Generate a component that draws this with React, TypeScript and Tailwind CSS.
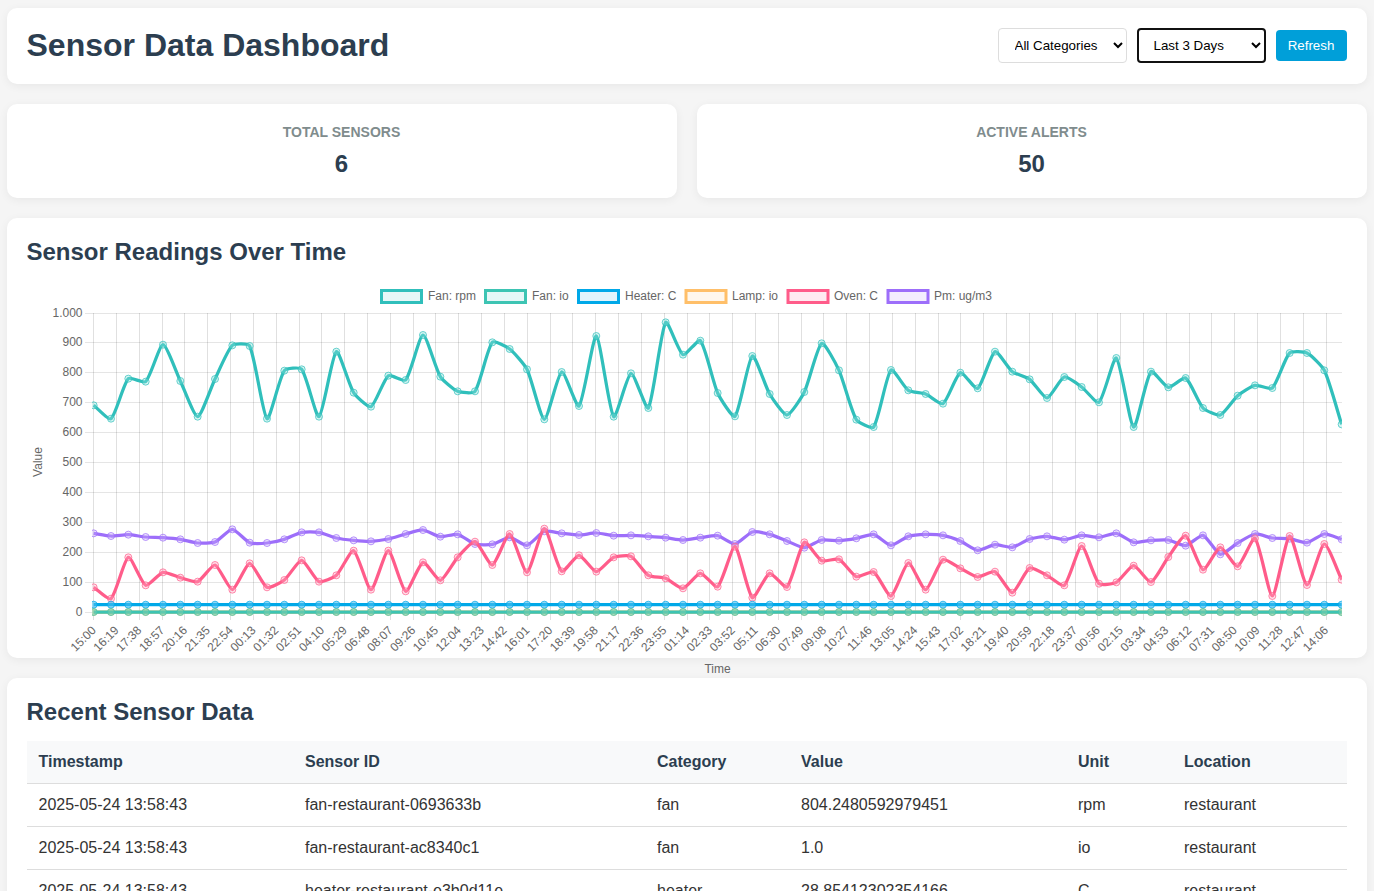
import React from "react";

type Series = {
  label: string;
  color: string;
  tint: string;
  dot: string;
  legendX: number;
  textX: number;
  ys: number[];
};

// readings traced off the chart, in page pixels x3 above y=280
const rpmTrace = [
  376, 416, 296, 305, 194, 303, 410, 297, 196, 198, 416, 272, 268, 410, 215, 338, 380, 287, 300, 165, 290, 334,
  334, 187, 207, 268, 418, 276, 378, 168, 410, 280, 384, 127, 224, 182, 339, 409, 228, 342, 405, 336, 190, 271,
  419, 441, 270, 331, 342, 371, 278, 325, 215, 275, 298, 354, 291, 321, 367, 234, 441, 275, 322, 294, 384, 405,
  347, 316, 324, 219, 219, 271, 433,
];
const pmTrace = [
  760, 768, 764, 771, 773, 778, 789, 786, 748, 788, 789, 778, 757, 757, 774, 781, 784, 777, 762, 750, 770, 763,
  792, 793, 772, 796, 754, 760, 765, 759, 767, 766, 769, 773, 780, 773, 767, 792, 756, 763, 783, 803, 780, 782,
  775, 763, 796, 769, 763, 766, 783, 811, 794, 802, 777, 769, 779, 766, 772, 760, 787, 781, 780, 797, 766, 823,
  789, 762, 774, 776, 788, 762, 778,
];
const ovenTrace = [
  922, 956, 832, 916, 877, 893, 905, 855, 929, 850, 922, 900, 841, 905, 886, 812, 929, 812, 934, 847, 901, 832,
  785, 855, 762, 877, 746, 874, 826, 875, 832, 829, 886, 895, 925, 880, 920, 800, 953, 880, 921, 787, 842, 838,
  890, 876, 948, 849, 929, 839, 865, 891, 875, 938, 864, 886, 916, 798, 911, 907, 857, 906, 831, 767, 869, 802,
  859, 775, 948, 768, 915, 792, 899,
];
const flat = (z: number) => rpmTrace.map(() => z);
const toPage = (z: number) => 280 + z / 3;

const series: Series[] = [
  { label: "Fan: rpm", color: "#30bfbb", tint: "rgba(48,191,187,0.12)", dot: "rgba(140,225,222,0.35)", legendX: 381.5, textX: 428, ys: rpmTrace },
  { label: "Fan: io", color: "#3dc4b3", tint: "rgba(48,191,187,0.12)", dot: "rgba(120,205,170,0.6)", legendX: 485.5, textX: 532, ys: flat(996) },
  { label: "Heater: C", color: "#00a8e8", tint: "rgba(0,168,232,0.12)", dot: "rgba(70,190,240,0.6)", legendX: 578.5, textX: 625, ys: flat(974) },
  { label: "Lamp: io", color: "#ffbf69", tint: "rgba(255,191,105,0.12)", dot: "rgba(255,220,170,0.5)", legendX: 686, textX: 732, ys: flat(996) },
  { label: "Oven: C", color: "#ff5c8a", tint: "rgba(255,92,138,0.12)", dot: "rgba(255,170,195,0.35)", legendX: 788, textX: 834, ys: ovenTrace },
  { label: "Pm: ug/m3", color: "#9d6efa", tint: "rgba(157,110,250,0.12)", dot: "rgba(200,175,250,0.35)", legendX: 888, textX: 934, ys: pmTrace },
];

const plotLeft = 93.67;
const hourStep = 17.333;
const tickStep = (hourStep * 79) / 60;
const yRows = [612, 582, 552, 522, 492, 462, 432, 402, 372, 342, 313];
const yLabels = ["0", "100", "200", "300", "400", "500", "600", "700", "800", "900", "1.000"];

const xTicks = Array.from({ length: 55 }, (_, i) => {
  const mins = (15 * 60 + i * 79) % 1440;
  const hh = String(Math.floor(mins / 60)).padStart(2, "0");
  const mm = String(mins % 60).padStart(2, "0");
  return { label: `${hh}:${mm}`, x: plotLeft + i * tickStep };
});

// same control points as a chart.js line with tension
function linePath(points: [number, number][], tension = 0.2) {
  let d = `M${points[0][0]} ${points[0][1]}`;
  const control = (i: number): [[number, number], [number, number]] => {
    const p0 = points[Math.max(i - 1, 0)];
    const p1 = points[i];
    const p2 = points[Math.min(i + 1, points.length - 1)];
    const d01 = Math.hypot(p1[0] - p0[0], p1[1] - p0[1]);
    const d12 = Math.hypot(p2[0] - p1[0], p2[1] - p1[1]);
    const total = d01 + d12 || 1;
    const fa = (tension * d01) / total;
    const fb = (tension * d12) / total;
    return [
      [p1[0] - fa * (p2[0] - p0[0]), p1[1] - fa * (p2[1] - p0[1])],
      [p1[0] + fb * (p2[0] - p0[0]), p1[1] + fb * (p2[1] - p0[1])],
    ];
  };
  for (let i = 1; i < points.length; i++) {
    const c1 = control(i - 1)[1];
    const c2 = control(i)[0];
    d += `C${c1[0]} ${c1[1]} ${c2[0]} ${c2[1]} ${points[i][0]} ${points[i][1]}`;
  }
  return d;
}

function SensorChart() {
  return (
    <svg
      viewBox="27 278 1320 400"
      className="ml-[0.5px] block h-[400px] w-[1320px] overflow-visible"
      fontFamily="'Liberation Sans', Arial, sans-serif"
      fontSize={12}
      fill="#666"
    >
      <defs>
        <clipPath id="plot-area">
          <rect x={92} y={300} width={1250} height={325} />
        </clipPath>
      </defs>

      {series.map((s) => (
        <g key={s.label}>
          <rect x={s.legendX} y={290.5} width={40} height={12} fill={s.tint} stroke={s.color} strokeWidth={3} />
          <text x={s.textX} y={300}>
            {s.label}
          </text>
        </g>
      ))}

      {yRows.map((row, i) => (
        <g key={row}>
          <line x1={85} x2={1342} y1={row + 0.5} y2={row + 0.5} stroke="rgba(0,0,0,0.1)" />
          <text x={82.5} y={row + 3.5} textAnchor="end">
            {yLabels[i]}
          </text>
        </g>
      ))}
      {xTicks.map((t) => (
        <g key={t.label + t.x}>
          <line
            x1={Math.floor(t.x) + 0.5}
            x2={Math.floor(t.x) + 0.5}
            y1={313}
            y2={620}
            stroke="rgba(0,0,0,0.12)"
          />
          <text textAnchor="end" transform={`translate(${t.x + 3} 631) rotate(-45)`}>
            {t.label}
          </text>
        </g>
      ))}

      <text textAnchor="middle" transform="translate(42 462) rotate(-90)">
        Value
      </text>
      <text x={717.5} y={673} textAnchor="middle">
        Time
      </text>

      <g clipPath="url(#plot-area)">
        {[...series].reverse().map((s) => {
          const pts = s.ys.map((z, i): [number, number] => [plotLeft + i * hourStep, toPage(z)]);
          return (
            <g key={s.label}>
              <path d={linePath(pts)} fill="none" stroke={s.color} strokeWidth={3.25} />
              {pts.map(([x, y], i) => (
                <circle key={i} cx={x} cy={y} r={3.5} fill={s.dot} stroke={s.color} strokeOpacity={0.7} strokeWidth={1} />
              ))}
            </g>
          );
        })}
      </g>
    </svg>
  );
}

const rows = [
  ["2025-05-24 13:58:43", "fan-restaurant-0693633b", "fan", "804.2480592979451", "rpm", "restaurant"],
  ["2025-05-24 13:58:43", "fan-restaurant-ac8340c1", "fan", "1.0", "io", "restaurant"],
  ["2025-05-24 13:58:43", "heater-restaurant-e3b0d11e", "heater", "28.85412302354166", "C", "restaurant"],
];

const headers = ["Timestamp", "Sensor ID", "Category", "Value", "Unit", "Location"];

export default function App() {
  const card = "rounded-[10px] bg-white shadow-[0_2px_10px_rgba(0,0,0,0.06)]";
  return (
    <div className="min-h-screen bg-[#f5f5f5] pt-2 pb-5 pl-[6.5px] font-['Liberation_Sans',Arial,sans-serif] text-[#333]">
      <div className="w-[1360px]">
        <header className={`${card} mb-5 flex h-[76px] items-center justify-between px-5 pb-px`}>
          <h1 className="mb-0.5 text-[32px] leading-9 font-bold text-[#2c3e50]">Sensor Data Dashboard</h1>
          <div className="flex items-center gap-2.5">
            <select className="h-[35px] w-[129px] rounded border border-[#ddd] px-3 text-[13.33px] text-black">
              <option>All Categories</option>
            </select>
            <select
              defaultValue="3"
              className="h-[35px] w-[129px] rounded border-2 border-[#111] px-[11px] text-[13.33px] text-black"
            >
              <option value="3">Last 3 Days</option>
            </select>
            <button className="h-[31px] w-[71px] rounded bg-[#009fd9] text-[13.33px] text-white">Refresh</button>
          </div>
        </header>

        <div className="mb-5 grid grid-cols-2 gap-5">
          {[
            ["TOTAL SENSORS", "6"],
            ["ACTIVE ALERTS", "50"],
          ].map(([label, value]) => (
            <div key={label} className={`${card} flex h-[94px] flex-col items-center pt-5`}>
              <div className="text-sm leading-4 font-bold text-[#7f8c8d]">{label}</div>
              <div className="mt-[10px] text-2xl leading-7 font-bold text-[#2c3e50]">{value}</div>
            </div>
          ))}
        </div>

        <section className={`${card} mb-5 h-[440px] px-5 pt-5`}>
          <h2 className="mb-3 text-2xl leading-7 font-bold text-[#2c3e50]">Sensor Readings Over Time</h2>
          <SensorChart />
        </section>

        <section className={`${card} px-5 pt-5 pb-5`}>
          <h2 className="mb-[15px] text-2xl leading-7 font-bold text-[#2c3e50]">Recent Sensor Data</h2>
          <table className="w-full table-fixed border-collapse text-base leading-[18px]">
            <colgroup>
              <col className="w-[266.5px]" />
              <col className="w-[352px]" />
              <col className="w-[144px]" />
              <col className="w-[277px]" />
              <col className="w-[106px]" />
              <col className="w-[174.5px]" />
            </colgroup>
            <thead>
              <tr className="border-b border-[#ddd] bg-[#f8f9fa]">
                {headers.map((h) => (
                  <th key={h} className="p-3 text-left font-bold text-[#2c3e50]">
                    {h}
                  </th>
                ))}
              </tr>
            </thead>
            <tbody>
              {rows.map((row) => (
                <tr key={row[1]} className="border-b border-[#ddd]">
                  {row.map((cell, i) => (
                    <td key={i} className="p-3">
                      {cell}
                    </td>
                  ))}
                </tr>
              ))}
            </tbody>
          </table>
        </section>
      </div>
    </div>
  );
}
